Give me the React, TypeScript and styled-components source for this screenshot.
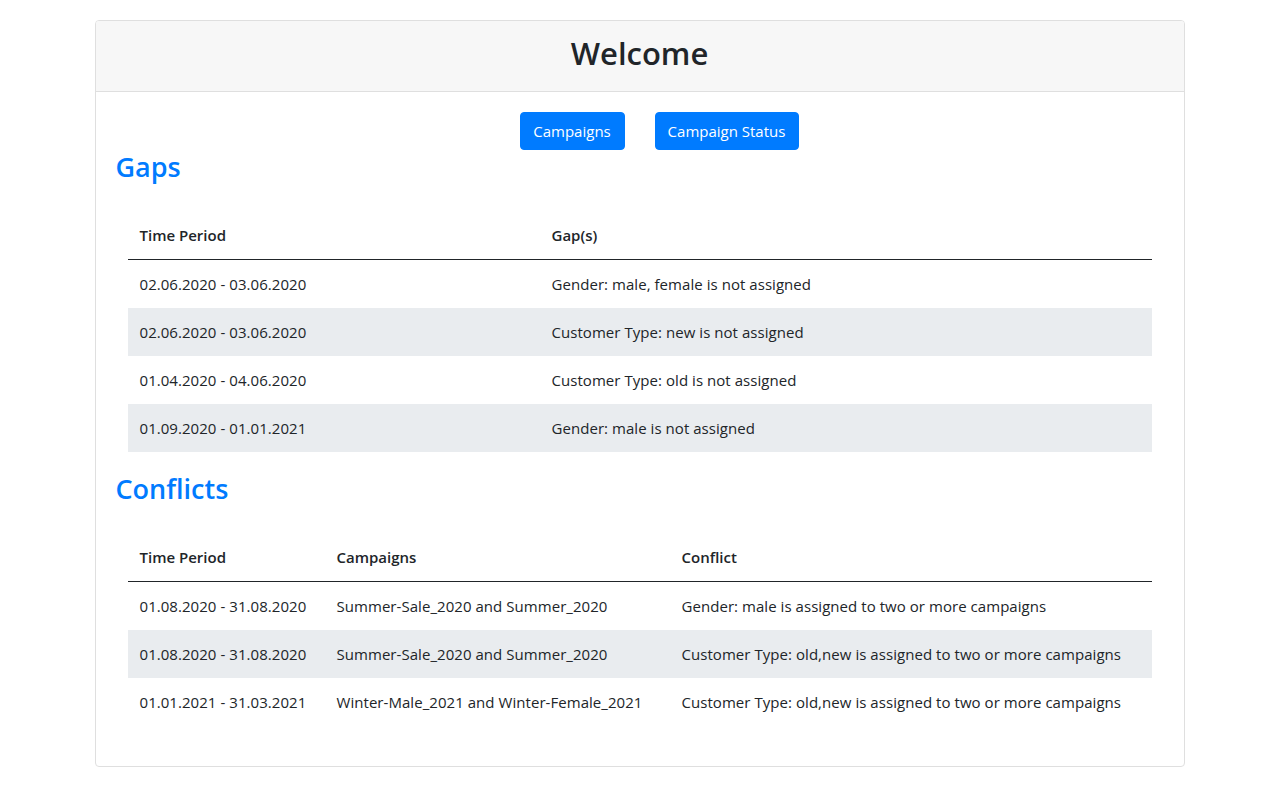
import React from "react";
import styled, { createGlobalStyle } from "styled-components";

const Global = createGlobalStyle`
  html, body { margin: 0; padding: 0; background: #fff; }
  body {
    font-family: "Open Sans", "Noto Sans", sans-serif;
    font-size: 16px;
    line-height: 24px;
    color: #212529;
  }
  * { box-sizing: border-box; }
`;

const Page = styled.div`
  padding-top: 20px;
  display: flex;
  justify-content: center;
`;

const Card = styled.div`
  width: 1090px;
  border: 1px solid #dfdfdf;
  border-radius: 4px;
  overflow: hidden;
`;

const CardHeader = styled.div`
  height: 71px;
  padding-bottom: 6px;
  background: #f7f7f7;
  border-bottom: 1px solid #dfdfdf;
  display: flex;
  align-items: center;
  justify-content: center;
`;

const Title = styled.h1`
  margin: 0;
  font-size: 31px;
  font-weight: 600;
  line-height: 38px;
  color: #212529;
`;

const CardBody = styled.div`
  padding: 20px 20px 20px;
`;

const Toolbar = styled.div`
  display: flex;
  justify-content: center;
  gap: 30px;
  padding-left: 39px;
`;

const Button = styled.button<{ $w: number }>`
  width: ${(p) => p.$w}px;
  height: 38px;
  border: 1px solid #007bff;
  background: #007bff;
  color: #fff;
  border-radius: 4px;
  font-family: inherit;
  font-size: 15px;
  line-height: 24px;
  padding: 0;
  cursor: pointer;
`;

const SectionTitle = styled.h2`
  margin: 0 0 27px;
  font-size: 27px;
  font-weight: 600;
  line-height: 34px;
  color: #007bff;
`;

const Table = styled.table`
  width: 1024px;
  margin: 0 12px 20px;
  border-collapse: collapse;
  font-size: 15px;
`;

const Th = styled.th<{ $w?: number }>`
  text-align: left;
  font-weight: 600;
  padding: 12px;
  height: 48px;
  border-bottom: 1px solid #212529;
  ${(p) => (p.$w ? `width: ${p.$w}px;` : "")}
`;

const Tr = styled.tr`
  &:nth-child(even) { background: #e9ecef; }
`;

const Td = styled.td`
  padding: 12px;
  height: 48px;
  font-weight: 400;
  letter-spacing: 0.05px;
`;

const gaps = [
  ["02.06.2020 - 03.06.2020", "Gender: male, female is not assigned"],
  ["02.06.2020 - 03.06.2020", "Customer Type: new is not assigned"],
  ["01.04.2020 - 04.06.2020", "Customer Type: old is not assigned"],
  ["01.09.2020 - 01.01.2021", "Gender: male is not assigned"],
];

const conflicts = [
  ["01.08.2020 - 31.08.2020", "Summer-Sale_2020 and Summer_2020", "Gender: male is assigned to two or more campaigns"],
  ["01.08.2020 - 31.08.2020", "Summer-Sale_2020 and Summer_2020", "Customer Type: old,new is assigned to two or more campaigns"],
  ["01.01.2021 - 31.03.2021", "Winter-Male_2021 and Winter-Female_2021", "Customer Type: old,new is assigned to two or more campaigns"],
];

export default function App() {
  return (
    <>
      <Global />
      <Page>
        <Card>
          <CardHeader>
            <Title>Welcome</Title>
          </CardHeader>
          <CardBody>
            <Toolbar>
              <Button $w={105}>Campaigns</Button>
              <Button $w={144}>Campaign Status</Button>
            </Toolbar>
            <SectionTitle>Gaps</SectionTitle>
            <Table>
              <thead>
                <tr>
                  <Th $w={412}>Time Period</Th>
                  <Th>Gap(s)</Th>
                </tr>
              </thead>
              <tbody>
                {gaps.map((r, i) => (
                  <Tr key={i}>
                    <Td>{r[0]}</Td>
                    <Td>{r[1]}</Td>
                  </Tr>
                ))}
              </tbody>
            </Table>
            <SectionTitle>Conflicts</SectionTitle>
            <Table>
              <thead>
                <tr>
                  <Th $w={197}>Time Period</Th>
                  <Th $w={345}>Campaigns</Th>
                  <Th>Conflict</Th>
                </tr>
              </thead>
              <tbody>
                {conflicts.map((r, i) => (
                  <Tr key={i}>
                    <Td>{r[0]}</Td>
                    <Td>{r[1]}</Td>
                    <Td>{r[2]}</Td>
                  </Tr>
                ))}
              </tbody>
            </Table>
          </CardBody>
        </Card>
      </Page>
    </>
  );
}
